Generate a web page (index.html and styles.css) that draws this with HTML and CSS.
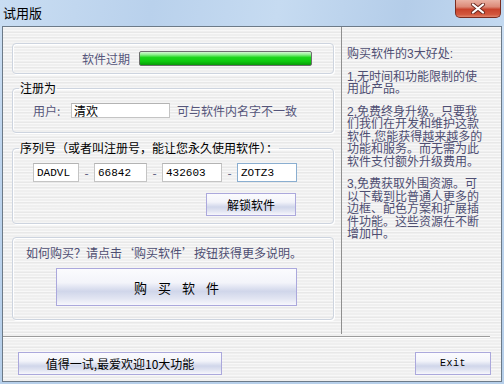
FILE: index.html
```html
<!DOCTYPE html>
<html lang="zh-CN">
<head>
    <meta charset="UTF-8">
    <title>试用版</title>
    <link rel="stylesheet" href="styles.css">
</head>
<body>

<div class="window">
    <div class="titlebar">
        <span class="title">试用版</span>
        <button class="close" type="button">
            <svg width="16" height="11" viewBox="0 0 16 11">
                <path d="M3 1.5 L13 9.5 M13 1.5 L3 9.5" stroke="#6b2a20" stroke-width="4" stroke-linecap="round"/>
                <path d="M3 1.5 L13 9.5 M13 1.5 L3 9.5" stroke="#ffffff" stroke-width="2.2" stroke-linecap="round"/>
            </svg>
        </button>
    </div>

    <div class="client">
        <div class="main">
            <div class="left">
                <div class="panel status">
                    <span class="status-label">软件过期</span>
                    <div class="progress"></div>
                </div>

                <fieldset class="group user-group">
                    <legend>注册为</legend>
                    <div class="user-row">
                        <label for="user">用户:</label>
                        <input type="text" id="user" class="field user-field" value="清欢">
                        <span class="hint">可与软件内名字不一致</span>
                    </div>
                </fieldset>

                <fieldset class="group serial-group">
                    <legend>序列号（或者叫注册号，能让您永久使用软件）：</legend>
                    <div class="serial-row">
                        <input type="text" class="field serial s1" value="DADVL">
                        <span class="dash">-</span>
                        <input type="text" class="field serial s2" value="66842">
                        <span class="dash">-</span>
                        <input type="text" class="field serial s3" value="432603">
                        <span class="dash">-</span>
                        <input type="text" class="field serial s4 focused" value="ZOTZ3">
                    </div>
                    <div class="unlock-row">
                        <button class="btn unlock" type="button">解锁软件</button>
                    </div>
                </fieldset>

                <div class="panel buy-panel">
                    <p class="buy-tip">如何购买？请点击‘购买软件’按钮获得更多说明。</p>
                    <button class="btn buy" type="button">购买软件</button>
                </div>
            </div>

            <div class="right">
                <p>购买软件的3大好处:</p>
                <p>1,无时间和功能限制的使<br>用此产品。</p>
                <p>2,免费终身升级。只要我<br>们我们在开发和维护这款<br>软件,您能获得越来越多的<br>功能和服务。而无需为此<br>软件支付额外升级费用。</p>
                <p>3,免费获取外围资源。可<br>以下载到比普通人更多的<br>边框、配色方案和扩展插<br>件功能。这些资源在不断<br>增加中。</p>
            </div>
        </div>
        <div class="divider"></div>

        <div class="footer">
            <button class="btn try" type="button">值得一试,最爱欢迎10大功能</button>
            <button class="btn exit" type="button">Exit</button>
        </div>
    </div>
</div>

</body>
</html>
```

FILE: styles.css
```css
* {
    box-sizing: border-box;
}
body {
    margin: 0;
    font-family: "Noto Sans CJK SC", "Noto Sans", sans-serif;
    font-size: 12px;
    background: #bcd3ec;
}
.window {
    width: 504px;
    height: 384px;
    display: flex;
    flex-direction: column;
    background: linear-gradient(to bottom, #cfe1f4 0%, #bdd4ed 40%, #b6cfea 100%);
}
.titlebar {
    height: 26px;
    display: flex;
    justify-content: space-between;
    align-items: flex-start;
    background: linear-gradient(100deg, #c9ddf2 0%, #b9d1ec 30%, #c6dbf1 55%, #b4cde9 80%, #c3d9f0 100%);
}
.title {
    margin: 5px 0 0 3px;
    font-size: 13px;
    line-height: 16px;
    color: #000;
}
.close {
    width: 46px;
    height: 18px;
    margin-right: 3px;
    padding: 0;
    border: 1px solid #7a2c20;
    border-top: none;
    border-radius: 0 0 5px 5px;
    background: linear-gradient(to bottom, #eab2a4 0%, #dc8a78 40%, #c8432c 55%, #d2573d 85%, #e0856c 100%);
    display: flex;
    align-items: center;
    justify-content: center;
}
.client {
    flex: 1;
    margin: 0 2px 2px 2px;
    border: 1px solid #6c7a88;
    background-color: #efefef;
    background-image:
        repeating-linear-gradient(to bottom, rgba(255, 255, 255, 0.55) 0 1px, transparent 1px 3px),
        repeating-linear-gradient(to bottom, rgba(0, 0, 0, 0.03) 0 1px, transparent 1px 5px);
    display: flex;
    flex-direction: column;
}
.main {
    height: 307px;
    display: flex;
}
.left {
    width: 339px;
    padding-left: 9px;
    border-right: 1px solid #8f8f8f;
}
.divider {
    height: 2px;
    margin: 2px 11px 0 0;
    border-top: 1px solid #9c9c9c;
    border-bottom: 1px solid #ffffff;
}
.panel, .group {
    width: 322px;
    border: 1px solid #cdd4df;
    border-radius: 4px;
    box-shadow: inset 1px 1px 0 #ffffff, 1px 1px 0 #ffffff;
}
.status {
    height: 31px;
    margin-top: 16px;
    display: flex;
    align-items: center;
    padding-left: 69px;
}
.status-label {
    width: 48px;
    margin-right: 9px;
    color: #55557a;
    line-height: 14px;
}
.progress {
    width: 173px;
    height: 15px;
    border: 1px solid #6e6e6e;
    border-radius: 2px;
    background: linear-gradient(to bottom, #d4f7d4 0%, #8ef08e 20%, #1bd51b 42%, #0fca0f 72%, #0a9a0a 100%);
}
.group {
    margin: 0;
    padding: 0;
}
.group legend {
    margin-left: 6px;
    padding: 0 1px;
    line-height: 14px;
    color: #000;
}
.user-group {
    margin-top: 7px;
    padding-bottom: 14px;
}
.user-row {
    margin-top: 8px;
    display: flex;
    align-items: center;
    padding-left: 20px;
}
.user-row label {
    width: 38px;
    color: #55557a;
    line-height: 15px;
}
.field {
    font-family: "Noto Sans CJK SC", sans-serif;
    font-size: 12px;
    color: #000;
    background: #fff;
    border: 1px solid #c4c4c4;
    border-top-color: #b3b3b3;
    padding: 0 2px;
    margin: 0;
    outline: none;
}
.user-field {
    width: 99px;
    height: 15px;
    line-height: 13px;
}
.hint {
    margin-left: 7px;
    color: #55557a;
    line-height: 15px;
}
.serial-group {
    margin-top: 8px;
    padding-bottom: 7px;
}
.serial-row {
    margin-top: 8px;
    padding-left: 20px;
    display: flex;
    align-items: center;
}
.serial {
    height: 19px;
    font-family: "Liberation Mono", "DejaVu Sans Mono", monospace;
    font-size: 11px;
    padding: 0 3px;
}
.s1 {
    width: 46px;
}
.s2 {
    width: 53px;
}
.s3, .s4 {
    width: 60px;
}
.s4.focused {
    border-color: #8aaed0;
}
.dash {
    width: 15px;
    text-align: center;
    color: #55557a;
    line-height: 14px;
}
.unlock-row {
    margin-top: 11px;
    display: flex;
    justify-content: flex-end;
    padding-right: 37px;
}
.btn {
    font-family: "Noto Sans CJK SC", "Noto Sans", sans-serif;
    font-size: 12px;
    color: #000;
    padding: 0;
    border: 1px solid #aba8dc;
    background: linear-gradient(to bottom, #fbfbfe 0%, #f3f4fa 38%, #d0d6ea 62%, #e2e5f2 82%, #f7f7fc 100%);
    cursor: pointer;
}
.unlock {
    width: 90px;
    height: 23px;
}
.buy-panel {
    height: 83px;
    margin-top: 13px;
    padding: 8px 0 0 13px;
}
.buy-tip {
    margin: 0;
    line-height: 13px;
    color: #4e4e72;
}
.buy {
    display: block;
    width: 241px;
    height: 38px;
    margin: 9px 0 0 30px;
    padding-left: 11px;
    font-size: 13px;
    letter-spacing: 11px;
}
.right {
    flex: 1;
    padding: 21px 0 0 5px;
    font-family: "Liberation Sans", "Noto Sans CJK SC", sans-serif;
    color: #4e4e72;
    line-height: 12.5px;
    white-space: nowrap;
}
.right p {
    margin: 0 0 10px 0;
}
.footer {
    flex: 1;
    display: flex;
    justify-content: space-between;
    align-items: flex-start;
    padding: 14px 10px 0 15px;
}
.try {
    width: 204px;
    height: 23px;
}
.exit {
    width: 76px;
    height: 23px;
    font-family: "Liberation Mono", monospace;
    font-size: 10px;
    letter-spacing: 0.5px;
}
```
